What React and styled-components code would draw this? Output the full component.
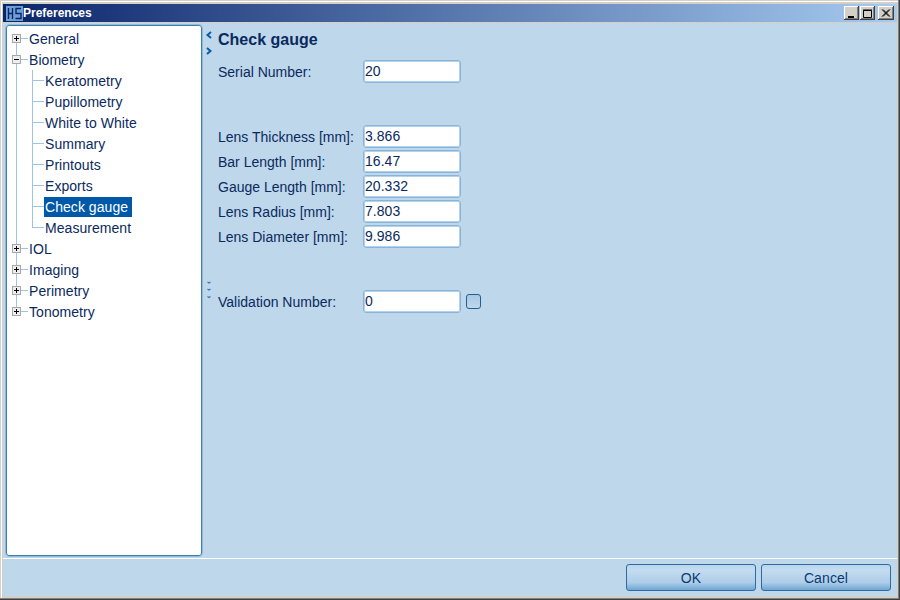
import React from "react";
import styled, { createGlobalStyle } from "styled-components";

const Global = createGlobalStyle`
  html, body { margin: 0; padding: 0; width: 900px; height: 600px; overflow: hidden; }
  body { font-family: "Liberation Sans", Arial, sans-serif; font-size: 14px; letter-spacing: 0.05px; color: #0a2a5e; }
  * { box-sizing: border-box; }
`;

const Frame = styled.div`
  width: 900px; height: 600px; display: flex; flex-direction: column;
  background: #d4d0c8; padding: 4px 3px 4px 3px;
  box-shadow: inset -1px -1px 0 #404040, inset -2px -2px 0 #808080, inset 1px 1px 0 #d4d0c8, inset 2px 2px 0 #fff;
`;
const TitleBar = styled.div`
  height: 18px; flex: none; display: flex; align-items: center; padding: 0 3px 0 3px;
  background: linear-gradient(90deg, #0a246a 0%, #a6caf0 100%);
`;
const TitleText = styled.span`
  color: #fff; font-weight: bold; font-size: 12px; letter-spacing: 0; margin-left: 0;
`;
const WinButtons = styled.div`
  margin-left: auto; display: flex; align-items: center;
`;
const WinButton = styled.button`
  width: ${p => p.$w}px; height: 14px; padding: 0; border: 0; margin-left: ${p => p.$gap}px; background: #d4d0c8;
  display: flex; align-items: center; justify-content: center;
  box-shadow: inset -1px -1px 0 #404040, inset 1px 1px 0 #fff, inset -2px -2px 0 #808080;
`;
const Body = styled.div`
  flex: 1; min-height: 0; display: flex; flex-direction: column; margin-top: 1px; background: #bfd7ea;
`;
const Split = styled.div`
  flex: 1; min-height: 0; display: flex;
  border-bottom: 1px solid #fff;
`;
const TreePanel = styled.div`
  width: 196px; margin: 2px 1px 2px 3px; flex: none; padding: 2px 0 0 0; background: #fff;
  border: 1px solid #3c7fae; border-radius: 3px; outline: 1px solid #8fbbdd;
`;
const TreeRow = styled.div`
  height: 21px; display: flex; align-items: stretch;
`;
const Guide = styled.svg`
  flex: none; display: block;
`;
const RowLabel = styled.span`
  align-self: center; height: 20px; line-height: 20px; padding: 0 ${p => p.$selected ? 4 : 0}px 0 1px;
  white-space: nowrap;
  background: ${p => p.$selected ? "#0058a8" : "transparent"};
  color: ${p => p.$selected ? "#fff" : "#0a2a5e"};
`;
const Divider = styled.div`
  width: 11px; flex: none; display: flex; flex-direction: column; align-items: center;
`;
const Chevrons = styled.svg`
  margin-top: 8px; display: block; flex: none;
`;
const Dots = styled.svg`
  margin-top: 224px; display: block; flex: none;
`;
const Content = styled.div`
  flex: 1; min-width: 0; padding: 7px 0 0 4px;
`;
const Heading = styled.h1`
  margin: 0 0 9px 0; font-size: 16px; line-height: 20px; font-weight: bold; color: #0a2a5e; letter-spacing: 0;
`;
const FieldRow = styled.div`
  display: flex; align-items: center; height: 25px; margin-top: ${p => p.$top || 0}px;
`;
const FieldLabel = styled.label`
  width: 145px; flex: none; white-space: nowrap; letter-spacing: 0;
`;
const Field = styled.div`
  width: 98px; height: 23px; flex: none; background: #fff; padding: 0 1px; line-height: 21px;
  border: 1px solid #86b4da; border-radius: 3px; box-shadow: inset 0 0 0 1px #b4d2ea; color: #0a2a5e;
`;
const Check = styled.div`
  width: 15px; height: 15px; margin-left: 5px; border: 1px solid #1f5f96; border-radius: 3px; background: linear-gradient(180deg, #a9c9e4, #bfd7ea);
`;
const Footer = styled.div`
  height: 37px; flex: none; display: flex; justify-content: flex-end; gap: 5px; padding: 5px 6px 0 0;
`;
const ActionButton = styled.button`
  width: 130px; height: 27px; padding: 1px 0 0; border: 1px solid #2c6ca3; border-radius: 3px;
  font: 14px "Liberation Sans", Arial, sans-serif; color: #0b3a72; letter-spacing: 0.1px;
  background: linear-gradient(180deg, #b9d5ec 0%, #c4dcf0 20%, #aecde8 70%, #6fa6d3 100%);
`;

const Logo = () => (
  <svg width="17" height="15" viewBox="0 0 17 15">
    <rect width="17" height="15" fill="#6ea1d3" />
    <path d="M2.5 2v11M6.5 2v11M2.5 7.5h4" stroke="#0a246a" strokeWidth="1.4" fill="none" />
    <path d="M15 2.5H10V7.5h5v5H9.5" stroke="#0a246a" strokeWidth="1.4" fill="none" />
  </svg>
);

const RootGuide = ({ kind, last, first }) => (
  <Guide width="21" height="21" viewBox="0 0 21 21">
    <path d={`M9.5 ${first ? 10 : 0}V${last ? 10 : 21}`} stroke="#9cc4e4" fill="none" />
    <path d="M14 10.5H21" stroke="#9cc4e4" fill="none" />
    <rect x="5.5" y="6.5" width="8" height="8" fill="#eee" stroke="#a8a8a8" />
    <path d="M7 10.5h5" stroke="#000" fill="none" />
    {kind === "plus" && <path d="M9.5 8v5" stroke="#000" fill="none" />}
  </Guide>
);
const ChildGuide = ({ last }) => (
  <Guide width="37" height="21" viewBox="0 0 37 21">
    <path d="M9.5 0V21" stroke="#9cc4e4" fill="none" />
    <path d={`M25.5 0V${last ? 10.5 : 21}M25 10.5H37`} stroke="#9cc4e4" fill="none" />
  </Guide>
);

const tree = [
  { t: "General", k: "plus", first: true },
  { t: "Biometry", k: "minus" },
  { t: "Keratometry" }, { t: "Pupillometry" }, { t: "White to White" }, { t: "Summary" },
  { t: "Printouts" }, { t: "Exports" }, { t: "Check gauge", sel: true }, { t: "Measurement", last: true },
  { t: "IOL", k: "plus" }, { t: "Imaging", k: "plus" }, { t: "Perimetry", k: "plus" },
  { t: "Tonometry", k: "plus", end: true },
];

const CloseGlyph = () => (
  <svg width="10" height="9" viewBox="0 0 10 9"><path d="M1 0.5l7 7M8 0.5l-7 7M2 0.5l7 7M9 0.5l-7 7" stroke="#000" fill="none" /></svg>
);

export default function App() {
  return (
    <>
      <Global />
      <Frame>
        <TitleBar>
          <Logo />
          <TitleText>Preferences</TitleText>
          <WinButtons>
            <WinButton $w={15} $gap={0}><svg width="10" height="9" viewBox="0 0 10 9"><rect x="1" y="7" width="6" height="2" fill="#000" /></svg></WinButton>
            <WinButton $w={15} $gap={1}><svg width="10" height="9" viewBox="0 0 10 9"><path d="M0.5 1.5h8v7h-8zM0 1h9" stroke="#000" fill="none" /></svg></WinButton>
            <WinButton $w={16} $gap={3}><CloseGlyph /></WinButton>
          </WinButtons>
        </TitleBar>
        <Body>
          <Split>
            <TreePanel>
              {tree.map(n => (
                <TreeRow key={n.t}>
                  {n.k ? <RootGuide kind={n.k} first={n.first} last={n.end} /> : <ChildGuide last={n.last} />}
                  <RowLabel $selected={n.sel}>{n.t}</RowLabel>
                </TreeRow>
              ))}
            </TreePanel>
            <Divider>
              <Chevrons width="8" height="26" viewBox="0 0 8 26">
                <path d="M6 1L2.5 4l3.5 3" stroke="#0a5ca8" strokeWidth="2" fill="none" />
                <path d="M2 17l3.5 3-3.5 3" stroke="#0a5ca8" strokeWidth="2" fill="none" />
              </Chevrons>
              <Dots width="6" height="18" viewBox="0 0 6 18">
                <path d="M1.5 1l1.5 1 1.5-1M1.5 8l1.5 1 1.5-1M1.5 15.5l1.5 1 1.5-1" stroke="#2f78b8" strokeWidth="1.2" fill="none" />
              </Dots>
            </Divider>
            <Content>
              <Heading>Check gauge</Heading>
              <FieldRow><FieldLabel>Serial Number:</FieldLabel><Field>20</Field></FieldRow>
              <FieldRow $top={40}><FieldLabel>Lens Thickness [mm]:</FieldLabel><Field>3.866</Field></FieldRow>
              <FieldRow><FieldLabel>Bar Length [mm]:</FieldLabel><Field>16.47</Field></FieldRow>
              <FieldRow><FieldLabel>Gauge Length [mm]:</FieldLabel><Field>20.332</Field></FieldRow>
              <FieldRow><FieldLabel>Lens Radius [mm]:</FieldLabel><Field>7.803</Field></FieldRow>
              <FieldRow><FieldLabel>Lens Diameter [mm]:</FieldLabel><Field>9.986</Field></FieldRow>
              <FieldRow $top={40}><FieldLabel>Validation Number:</FieldLabel><Field>0</Field><Check /></FieldRow>
            </Content>
          </Split>
          <Footer>
            <ActionButton>OK</ActionButton>
            <ActionButton>Cancel</ActionButton>
          </Footer>
        </Body>
      </Frame>
    </>
  );
}
